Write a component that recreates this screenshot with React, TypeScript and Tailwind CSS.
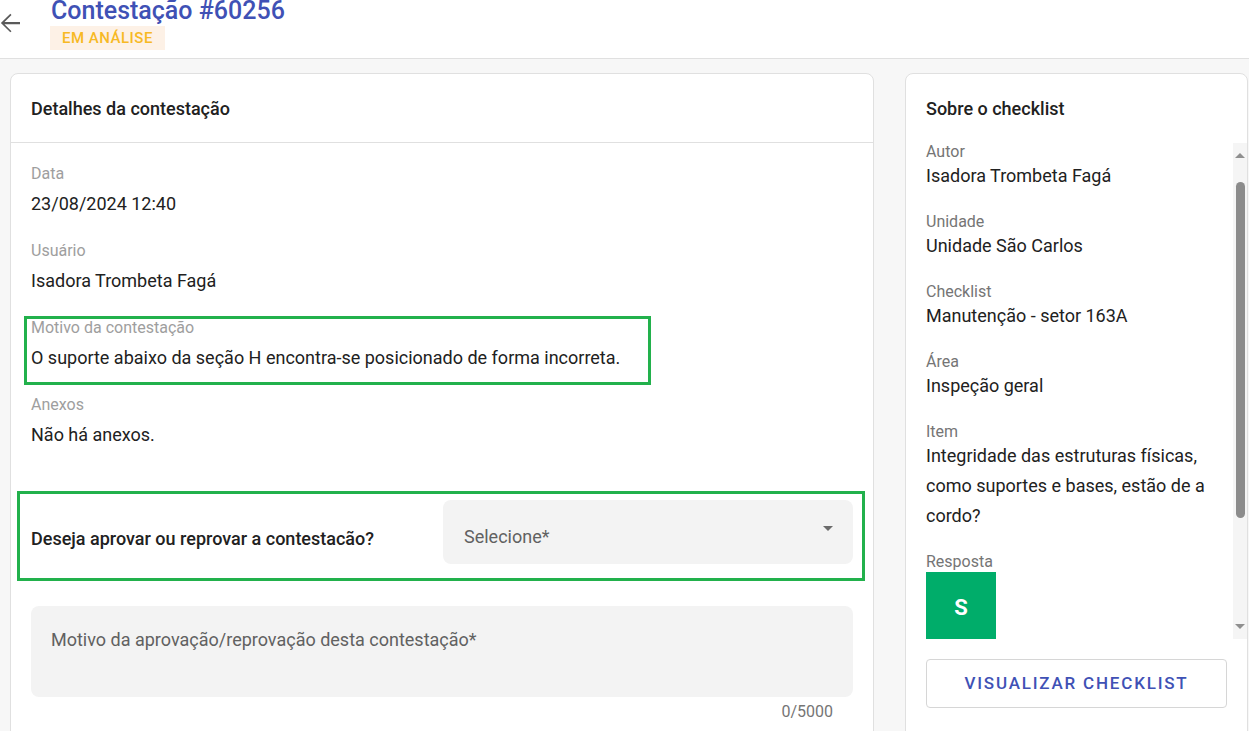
export default function App() {
  const leftFields = [
    { label: "Data", value: "23/08/2024 12:40" },
    { label: "Usuário", value: "Isadora Trombeta Fagá" },
  ];

  const rightFields = [
    { label: "Autor", value: "Isadora Trombeta Fagá" },
    { label: "Unidade", value: "Unidade São Carlos" },
    { label: "Checklist", value: "Manutenção - setor 163A" },
    { label: "Área", value: "Inspeção geral" },
    { label: "Item", value: "Integridade das estruturas físicas, como suportes e bases, estão de a cordo?" },
  ];

  return (
    <div className="h-[731px] overflow-hidden bg-[#f7f7f7] font-['Roboto',sans-serif] text-[#212121]">
      {/* Header */}
      <div className="flex h-[59px] border-b border-[#e0e0e0] bg-white">
        <div className="w-[51px] pt-[13px]">
          <svg width="20" height="20" viewBox="4 4 16 16" className="text-[#5a5a5a]">
            <path fill="currentColor" d="M20 11.1H7.6l5.6-5.6-.95-.95L4.7 12l7.55 7.45.95-.95-5.6-5.6H20v-1.8z" />
          </svg>
        </div>
        <div className="-mt-[3px]">
          <h1 className="text-[25px] leading-7 font-medium text-[#3f51b5]">Contestação #60256</h1>
          <span className="mt-px -ml-px inline-flex h-6 items-center bg-[#fdf1e6] px-3 text-[15px] font-medium tracking-[0.5px] text-[#f7b924]">
            EM ANÁLISE
          </span>
        </div>
      </div>

      {/* Body */}
      <div className="flex gap-[31px] pl-[10px] pt-[14px]">
        {/* Left card */}
        <div className="h-[720px] w-[864px] shrink-0 rounded-lg border border-[#e0e0e0] bg-white">
          <div className="flex h-[69px] items-center border-b border-[#e0e0e0] px-5 text-[18px] font-medium">
            Detalhes da contestação
          </div>
          <div className="px-5 pt-[21px]">
            {leftFields.map((f) => (
              <div key={f.label} className="mb-[25px]">
                <div className="text-base leading-5 text-[#9e9e9e]">{f.label}</div>
                <div className="mt-2 text-[18px] leading-6">{f.value}</div>
              </div>
            ))}
            <div className="relative mb-[25px]">
              <div className="text-base leading-5 text-[#9e9e9e]">Motivo da contestação</div>
              <div className="mt-2 text-[18px] leading-6">
                O suporte abaixo da seção H encontra-se posicionado de forma incorreta.
              </div>
              <div className="pointer-events-none absolute -left-[7px] -top-[2px] h-[69px] w-[627px] border-[3px] border-[#22b14c]" />
            </div>
            <div>
              <div className="text-base leading-5 text-[#9e9e9e]">Anexos</div>
              <div className="mt-2 text-[18px] leading-6">Não há anexos.</div>
            </div>

            {/* Decision row */}
            <div className="relative mt-[53px] grid grid-cols-2 items-center">
              <div className="pt-[14px] text-[18px] leading-6 font-medium">
                Deseja aprovar ou reprovar a contestacão?
              </div>
              <div className="ml-px flex h-16 items-center justify-between rounded-lg bg-[#f3f3f3] pl-[21px] pr-[20px]">
                <span className="pt-2 text-[18px] text-[#616161]">Selecione*</span>
                <span className="-mt-2 h-0 w-0 border-x-[5px] border-t-[5px] border-x-transparent border-t-[#6b6b6b]" />
              </div>
              <div className="pointer-events-none absolute -left-[14px] -top-[9px] h-[90px] w-[848px] border-[3px] border-[#22b14c]" />
            </div>

            {/* Textarea */}
            <div className="mt-[42px] h-[91px] rounded-lg bg-[#f3f3f3] px-5 pt-[22px] text-[18px] leading-6 text-[#616161]">
              Motivo da aprovação/reprovação desta contestação*
            </div>
            <div className="mt-[5px] pr-5 text-right text-base leading-5 text-[#757575]">0/5000</div>
          </div>
        </div>

        {/* Right card */}
        <div className="h-[720px] w-[343px] shrink-0 rounded-lg border border-[#e0e0e0] bg-white">
          <div className="flex h-[69px] items-center px-5 text-[18px] font-medium">Sobre o checklist</div>
          <div className="flex h-[496px]">
            <div className="flex-1 overflow-hidden pl-5 pr-[10px]">
              {rightFields.map((f) => (
                <div key={f.label} className="mb-[22px]">
                  <div className="text-base leading-[18px] text-[#757575]">{f.label}</div>
                  <div className="text-[18px] leading-[30px]">{f.value}</div>
                </div>
              ))}
              <div className="text-base leading-[18px] text-[#757575]">Resposta</div>
              <div className="mt-px flex h-[70px] w-[70px] items-center justify-center bg-[#00ad6a] text-[22px] font-bold text-white">
                S
              </div>
            </div>
            {/* Scrollbar */}
            <div className="flex w-[14px] flex-col items-center bg-[#f5f5f5] pt-[10px]">
              <span className="h-0 w-0 border-x-[5px] border-b-[5px] border-x-transparent border-b-[#8f8f8f]" />
              <span className="mt-[24px] h-[336px] w-[9px] rounded-full bg-[#8c8c8c]" />
              <span className="mb-[10px] mt-auto h-0 w-0 border-x-[5px] border-t-[5px] border-x-transparent border-t-[#8f8f8f]" />
            </div>
          </div>
          <div className="mx-5 mt-5 flex h-[49px] items-center justify-center rounded border border-[#d6d6d6] text-[17px] font-medium tracking-[1.8px] text-[#3f51b5]">
            VISUALIZAR CHECKLIST
          </div>
        </div>
      </div>
    </div>
  );
}
